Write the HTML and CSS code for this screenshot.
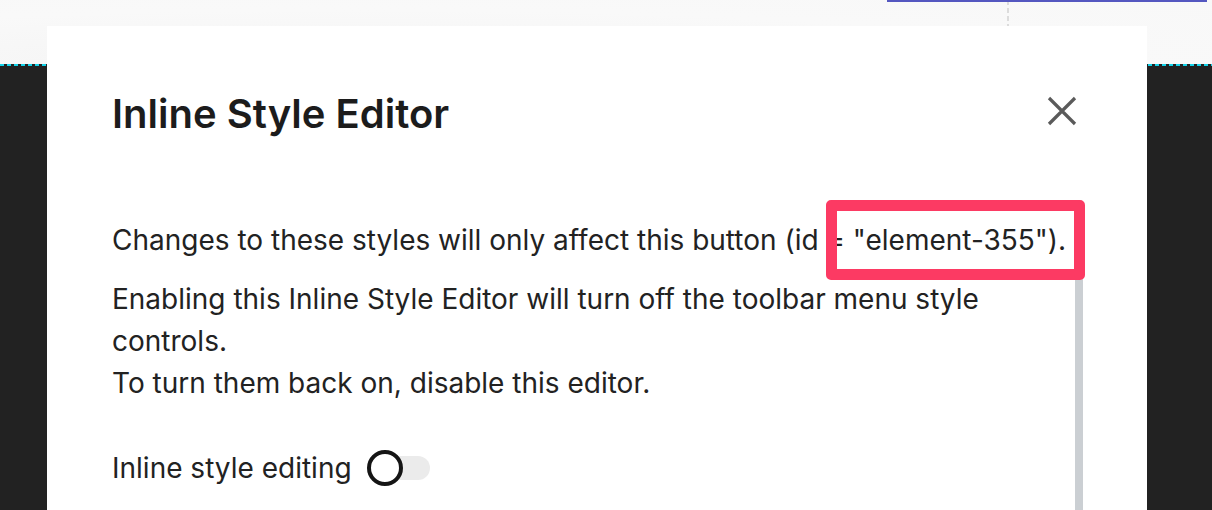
FILE: index.html
```html
<!DOCTYPE html>
<html lang="en">
<head>
<meta charset="utf-8">
<title>Inline Style Editor</title>
<link rel="stylesheet" href="styles.css">
</head>
<body>
<div class="page">
  <div class="topband">
    <div class="guide-v"></div>
    <div class="accent-line"></div>
  </div>
  <div class="dashline"></div>
  <div class="canvas"></div>
</div>

<div class="modal">
  <div class="modal-header">
    <h1 class="modal-title">Inline Style Editor</h1>
    <button class="close-btn" aria-label="Close">
      <svg width="30" height="30" viewBox="0 0 30 30"><path d="M2 2 L28 28 M28 2 L2 28" stroke="#5a5a5a" stroke-width="3.2" fill="none"/></svg>
    </button>
  </div>
  <div class="modal-body">
    <div class="body-content">
      <p class="p1">Changes to these styles will only affect this button (id = "element-355").</p>
      <p class="p2">Enabling this Inline Style Editor will turn off the toolbar menu style controls.<br>To turn them back on, disable this editor.</p>
      <div class="toggle-row">
        <span class="toggle-label">Inline style editing</span>
        <span class="toggle"><span class="toggle-knob"></span></span>
      </div>
    </div>
    <div class="scrollbar"></div>
  </div>
  <div class="highlight"></div>
</div>
</body>
</html>
```

FILE: styles.css
```css
* { box-sizing: border-box; }
html, body { margin: 0; padding: 0; }
body {
  width: 1212px;
  height: 510px;
  overflow: hidden;
  font-family: Inter, "Noto Sans", sans-serif;
  color: #222;
  background: #222222;
}
.page { display: flex; flex-direction: column; height: 510px; }
.topband {
  height: 64px;
  background: radial-gradient(ellipse at 30% 100%, #f4f4f4 0%, #f9f9f9 60%, #f8f8f8 100%);
  position: relative;
}
.accent-line {
  position: absolute;
  left: 887px;
  top: 0;
  width: 320px;
  height: 2px;
  background: #5457c0;
}
.guide-v {
  position: absolute;
  left: 1007px;
  top: 0;
  width: 2px;
  height: 26px;
  background: repeating-linear-gradient(180deg, #dcdcdc 0 5px, transparent 5px 8px);
}
.dashline {
  height: 2px;
  background: repeating-linear-gradient(90deg, #13d3ea 0 4px, transparent 4px 7px) #222;
}
.canvas { flex: 1; background: #222222; }

.modal {
  position: absolute;
  left: 47px;
  top: 26px;
  width: 1100px;
  height: 484px;
  overflow: hidden;
  background: #ffffff;
  padding: 64px 64px 0 65px;
}
.modal-header {
  display: flex;
  justify-content: space-between;
  align-items: flex-start;
}
.modal-title {
  margin: 0;
  font-size: 40px;
  line-height: 48px;
  font-weight: 600;
  color: #1c1c1c;
}
.close-btn {
  border: 0;
  background: none;
  padding: 0;
  margin: 6px 6px 0 0;
  width: 30px;
  height: 30px;
  display: block;
}
.close-btn svg { display: block; }

.modal-body {
  display: flex;
  margin-top: 81px;
}
.body-content { flex: 1; }
.body-content p {
  margin: 0;
  font-size: 28px;
  line-height: 42px;
  color: #222;
}
.p2 { margin-top: 17px !important; }
.scrollbar {
  width: 8px;
  margin-top: 59px;
  height: 300px;
  background: #cbcfd3;
}

.toggle-row {
  display: flex;
  align-items: center;
  gap: 15px;
  margin-top: 43px;
  height: 42px;
}
.toggle-label {
  font-size: 28px;
  line-height: 42px;
}
.toggle {
  position: relative;
  width: 63px;
  height: 24px;
  border-radius: 12px;
  background: #ebebeb;
}
.toggle-knob {
  position: absolute;
  left: 0;
  top: -6px;
  width: 36px;
  height: 36px;
  border-radius: 50%;
  border: 4px solid #151515;
  background: #fff;
}

.highlight {
  position: absolute;
  left: 779px;
  top: 174px;
  width: 259px;
  height: 80px;
  border: 11px solid #fc3a63;
  border-radius: 5px;
}
```
